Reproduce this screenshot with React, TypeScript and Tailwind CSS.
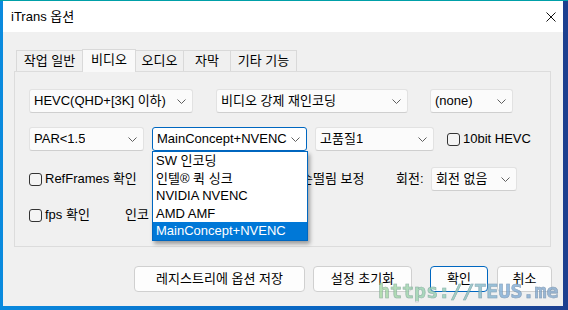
import React from 'react';

const Chevron = () => (
    <svg width="9" height="5" viewBox="0 0 9 5" className="shrink-0">
        <path d="M0.5 0.5 L4.5 4.5 L8.5 0.5" fill="none" stroke="#5f5f5f" strokeWidth="1" />
    </svg>
);

interface ComboProps {
    label: string;
    w: string;
    focused?: boolean;
}

const Combo: React.FC<ComboProps> = ({ label, w, focused }) => (
    <div
        className={`${w} h-[24px] flex items-center justify-between pl-[4px] pr-[6px] rounded-[3px] border ${
            focused ? 'bg-white border-[#0067c0]' : 'bg-[#fbfbfb] border-[#e2e2e2] border-b-[#cfcfcf]'
        }`}
    >
        <span className="whitespace-nowrap overflow-hidden">{label}</span>
        <Chevron />
    </div>
);

const Check: React.FC<{ label: string }> = ({ label }) => (
    <div className="flex items-center gap-[3px] whitespace-nowrap">
        <div className="w-[13px] h-[13px] rounded-[3px] border border-[#333] bg-[#f4f4f4] shrink-0" />
        <span>{label}</span>
    </div>
);

const tabs = [
    { name: '작업 일반', w: 'w-[67px]' },
    { name: '비디오', w: 'w-[54px]', active: true },
    { name: '오디오', w: 'w-[49px]' },
    { name: '자막', w: 'w-[48px]' },
    { name: '기타 기능', w: 'w-[67px]' },
];

const encoders = ['SW 인코딩', '인텔® 퀵 싱크', 'NVIDIA NVENC', 'AMD AMF', 'MainConcept+NVENC'];

export default function App() {
    return (
        <div className="relative w-[568px] h-[310px] overflow-hidden border-t border-[#00a0a8] pl-[3px] bg-[linear-gradient(90deg,#0a8ade_0%,#0a66c2_55%,#1d3f8f_100%)] font-['Liberation_Sans','Noto_Sans_CJK_KR',sans-serif] text-[13px] text-black">
            <div className="w-[560px] h-[305px] flex flex-col bg-[#f0f0f0]">
                {/* title bar */}
                <div className="h-[31px] bg-white flex items-center justify-between pl-[8px] pr-[7px]">
                    <span className="text-[13px] leading-none">iTrans 옵션</span>
                    <svg width="10" height="10" viewBox="0 0 10 10">
                        <path d="M0.5 0.5 L9.5 9.5 M9.5 0.5 L0.5 9.5" stroke="#111" strokeWidth="1" />
                    </svg>
                </div>

                <div className="flex flex-col pt-[16px] px-[11px]">
                    {/* tabs */}
                    <div className="flex items-end h-[23px] pl-[2px]">
                        {tabs.map((t) => (
                            <div
                                key={t.name}
                                className={`${t.w} flex items-center justify-center border border-b-0 border-[#d9d9d9] -mr-px whitespace-nowrap ${
                                    t.active ? 'h-[23px] bg-[#f9f9f9] pb-[3px] relative z-10 -mb-px' : 'h-[21px] bg-[#f0f0f0]'
                                }`}
                            >
                                {t.name}
                            </div>
                        ))}
                    </div>

                    {/* panel */}
                    <div className="relative w-[537px] h-[176px] border border-[#dcdcdc] pl-[14px] pt-[17px]">
                        <div className="flex h-[24px]">
                            <Combo label="HEVC(QHD+[3K] 이하)" w="w-[164px]" />
                            <div className="ml-[23px]">
                                <Combo label="비디오 강제 재인코딩" w="w-[192px]" />
                            </div>
                            <div className="ml-[22px]">
                                <Combo label="(none)" w="w-[83px]" />
                            </div>
                        </div>

                        <div className="flex items-center h-[24px] mt-[14px]">
                            <Combo label="PAR<1.5" w="w-[115px]" />
                            <div className="ml-[8px]">
                                <Combo label="MainConcept+NVENC" w="w-[155px]" focused />
                            </div>
                            <div className="ml-[8px]">
                                <Combo label="고품질1" w="w-[119px]" />
                            </div>
                            <div className="ml-[13px]">
                                <Check label="10bit HEVC" />
                            </div>
                        </div>

                        <div className="flex items-center h-[24px] mt-[16px]">
                            <div className="w-[256px]">
                                <Check label="RefFrames 확인" />
                            </div>
                            <div className="w-[111px]">
                                <Check label="손떨림 보정" />
                            </div>
                            <span className="w-[35px]">회전:</span>
                            <Combo label="회전 없음" w="w-[86px]" />
                        </div>

                        <div className="flex items-center h-[24px] mt-[12px]">
                            <div className="w-[96px]">
                                <Check label="fps 확인" />
                            </div>
                            {/* the rest of this label sits under the open list */}
                            <span className="w-[25px] overflow-hidden whitespace-nowrap">인코딩 설정</span>
                        </div>

                        {/* open dropdown list */}
                        <div className="absolute left-[137px] top-[79px] w-[156px] bg-white border border-[#0067c0] shadow-[2px_3px_4px_rgba(0,0,0,0.35)] z-20">
                            {encoders.map((e, i) => (
                                <div
                                    key={e}
                                    className={`h-[17.5px] flex items-center pl-[3px] whitespace-nowrap ${
                                        i === encoders.length - 1 ? 'bg-[#0078d7] text-white' : ''
                                    }`}
                                >
                                    {e}
                                </div>
                            ))}
                        </div>
                    </div>

                    {/* buttons */}
                    <div className="flex justify-end mt-[19px] h-[26px]">
                        <button className="w-[171px] h-[26px] rounded-[4px] border border-[#d0d0d0] bg-[#fdfdfd]">레지스트리에 옵션 저장</button>
                        <button className="w-[99px] h-[26px] ml-[8px] rounded-[4px] border border-[#d0d0d0] bg-[#fdfdfd]">설정 초기화</button>
                        <button className="w-[58px] h-[26px] ml-[18px] rounded-[4px] border border-[#0067c0] bg-[#fdfdfd]">확인</button>
                        <button className="w-[55px] h-[26px] ml-[9px] rounded-[4px] border border-[#d0d0d0] bg-[#fdfdfd]">취소</button>
                    </div>
                </div>
            </div>

            {/* watermark */}
            <div className="absolute left-[378px] top-[280px] text-[20px] leading-none font-bold font-['DejaVu_Sans_Mono',monospace] bg-[linear-gradient(90deg,#a6d9a0_0%,#8fcfb8_40%,#80acd8_70%,#86a9cc_100%)] bg-clip-text text-transparent opacity-80 [-webkit-text-stroke:0.6px_rgba(90,110,130,0.5)]">
                https://TEUS.me
            </div>
        </div>
    );
}
